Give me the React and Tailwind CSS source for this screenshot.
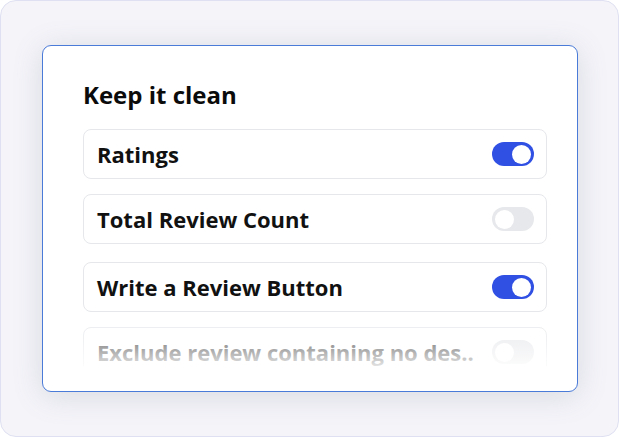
import React from "react";

function Toggle({ on }) {
  return (
    <div
      className={
        "w-[42px] h-[24px] rounded-full flex items-center px-[3px] " +
        (on ? "bg-[#3050e4] justify-end" : "bg-[#e7e8eb] justify-start")
      }
    >
      <div className="w-[19px] h-[19px] rounded-full bg-white" />
    </div>
  );
}

function Row({ label, on, className = "", textClass = "text-[#111111]" }) {
  return (
    <div
      className={
        "h-[50px] flex items-center justify-between border border-[#e6e7eb] rounded-[8px] bg-white pl-[13px] pr-[12px] " +
        className
      }
    >
      <span className={"text-[22px] leading-[30px] font-bold whitespace-nowrap " + textClass}>
        {label}
      </span>
      <Toggle on={on} />
    </div>
  );
}

export default function App() {
  return (
    <div
      className="w-[619px] h-[437px] bg-[#f4f4f9] border border-[#dfe0f1] rounded-[16px] pt-[44px] pl-[41px]"
      style={{ fontFamily: '"Open Sans", "Noto Sans", sans-serif' }}
    >
      <div className="w-[536px] h-[347px] bg-white border border-[#4b7bd8] rounded-[9px] shadow-[0_4px_30px_rgba(110,115,140,0.2)] pl-[40px] pr-[30px] pt-[33px]">
        <h1 className="text-[24px] leading-[32px] font-bold text-[#0b0b0b]">
          Keep it clean
        </h1>
        <div className="relative h-[237px] overflow-hidden mt-[18px]">
          <Row label="Ratings" on />
          <Row label="Total Review Count" className="mt-[15px]" />
          <Row label="Write a Review Button" on className="mt-[18px]" />
          <Row
            label="Exclude review containing no des.."
            className="mt-[15px]"
            textClass="text-[#3a3a3a]"
          />
          <div className="absolute left-0 right-0 bottom-0 h-[46px] bg-gradient-to-b from-white/20 via-white/45 to-white/85" />
        </div>
      </div>
    </div>
  );
}
